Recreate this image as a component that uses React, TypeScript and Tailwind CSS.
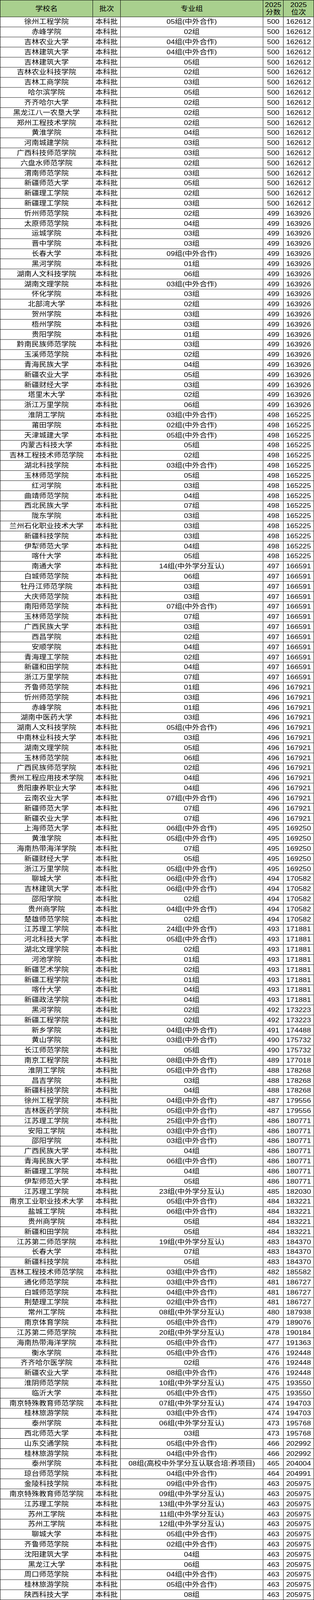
const raw = `徐州工程学院|05组(中外合作)|500|162612
赤峰学院|02组|500|162612
吉林农业大学|04组(中外合作)|500|162612
吉林建筑大学|04组(中外合作)|500|162612
吉林建筑大学|05组|500|162612
吉林农业科技学院|02组|500|162612
吉林工商学院|03组|500|162612
哈尔滨学院|05组|500|162612
齐齐哈尔大学|02组|500|162612
黑龙江八一农垦大学|02组|500|162612
郑州工程技术学院|02组|500|162612
黄淮学院|04组|500|162612
河南城建学院|03组|500|162612
广西科技师范学院|03组|500|162612
六盘水师范学院|02组|500|162612
渭南师范学院|03组|500|162612
新疆师范大学|05组|500|162612
新疆理工学院|02组|500|162612
新疆理工学院|03组|500|162612
忻州师范学院|02组|499|163926
太原师范学院|04组|499|163926
运城学院|03组|499|163926
晋中学院|03组|499|163926
长春大学|09组(中外合作)|499|163926
黑河学院|01组|499|163926
湖南人文科技学院|06组|499|163926
湖南文理学院|03组(中外合作)|499|163926
怀化学院|03组|499|163926
北部湾大学|02组|499|163926
贺州学院|03组|499|163926
梧州学院|03组|499|163926
贵阳学院|01组|499|163926
黔南民族师范学院|03组|499|163926
玉溪师范学院|02组|499|163926
青海民族大学|04组|499|163926
新疆农业大学|05组|499|163926
新疆财经大学|03组|499|163926
塔里木大学|02组|499|163926
浙江万里学院|06组|499|163926
淮阴工学院|03组(中外合作)|498|165225
莆田学院|02组(中外合作)|498|165225
天津城建大学|05组(中外合作)|498|165225
内蒙古科技大学|05组|498|165225
吉林工程技术师范学院|02组|498|165225
湖北科技学院|03组(中外合作)|498|165225
玉林师范学院|05组|498|165225
红河学院|03组|498|165225
曲靖师范学院|04组|498|165225
西北民族大学|07组|498|165225
陇东学院|03组|498|165225
兰州石化职业技术大学|03组|498|165225
新疆科技学院|03组|498|165225
伊犁师范大学|04组|498|165225
喀什大学|05组|498|165225
南通大学|14组(中外学分互认)|497|166591
白城师范学院|06组|497|166591
牡丹江师范学院|03组|497|166591
大庆师范学院|03组|497|166591
南阳师范学院|07组(中外合作)|497|166591
玉林师范学院|07组|497|166591
广西民族大学|03组|497|166591
西昌学院|02组|497|166591
安顺学院|04组|497|166591
青海理工学院|02组|497|166591
新疆和田学院|04组|497|166591
浙江万里学院|07组|497|166591
齐鲁师范学院|01组|496|167921
忻州师范学院|03组|496|167921
赤峰学院|01组|496|167921
湖南中医药大学|03组|496|167921
湖南人文科技学院|05组(中外合作)|496|167921
中南林业科技大学|03组|496|167921
湖南文理学院|05组|496|167921
玉林师范学院|06组|496|167921
广西民族师范学院|02组|496|167921
贵州工程应用技术学院|04组|496|167921
贵阳康养职业大学|04组|496|167921
云南农业大学|07组(中外合作)|496|167921
新疆师范大学|07组|496|167921
新疆农业大学|07组|496|167921
上海师范大学|06组(中外合作)|495|169250
黄淮学院|05组(中外合作)|495|169250
海南热带海洋学院|07组|495|169250
新疆财经大学|05组|495|169250
浙江万里学院|05组(中外合作)|495|169250
聊城大学|06组(中外合作)|494|170582
吉林建筑大学|06组(中外合作)|494|170582
邵阳学院|02组|494|170582
贵州商学院|04组(中外合作)|494|170582
楚雄师范学院|02组|494|170582
江苏理工学院|24组(中外合作)|493|171881
河北科技大学|05组(中外合作)|493|171881
湖北文理学院|02组|493|171881
河池学院|01组|493|171881
新疆艺术学院|02组|493|171881
新疆工程学院|01组|493|171881
喀什大学|04组|493|171881
新疆政法学院|04组|493|171881
黑河学院|02组|492|173223
新疆工程学院|02组|492|173223
新乡学院|04组(中外合作)|491|174488
黄山学院|03组(中外合作)|490|175732
长江师范学院|05组|490|175732
南京工程学院|08组(中外合作)|489|177018
淮阴工学院|05组(中外合作)|488|178268
昌吉学院|03组|488|178268
新疆科技学院|04组|488|178268
徐州工程学院|04组(中外合作)|487|179556
吉林医药学院|05组(中外合作)|487|179556
江苏理工学院|25组(中外合作)|486|180771
安阳工学院|03组(中外合作)|486|180771
邵阳学院|03组(中外合作)|486|180771
广西民族大学|04组|486|180771
青海民族大学|06组(中外合作)|486|180771
新疆理工学院|04组|486|180771
伊犁师范大学|05组|486|180771
江苏理工学院|23组(中外学分互认)|485|182030
南京工业职业技术大学|05组(中外合作)|484|183221
盐城工学院|06组(中外合作)|484|183221
贵州商学院|05组|484|183221
新疆和田学院|05组|484|183221
江苏第二师范学院|19组(中外学分互认)|483|184370
长春大学|07组|483|184370
新疆科技学院|05组|483|184370
吉林工程技术师范学院|03组(中外合作)|482|185582
通化师范学院|03组(中外合作)|481|186727
白城师范学院|04组(中外合作)|481|186727
荆楚理工学院|02组(中外合作)|481|186727
常州工学院|08组(中外学分互认)|480|187938
南京体育学院|05组(中外合作)|479|189076
江苏第二师范学院|20组(中外学分互认)|478|190184
海南热带海洋学院|05组(中外合作)|477|191363
衡水学院|05组(中外合作)|476|192448
齐齐哈尔医学院|02组|476|192448
新疆农业大学|08组(中外合作)|476|192448
淮阴师范学院|10组(中外学分互认)|475|193550
临沂大学|05组(中外合作)|475|193550
南京特殊教育师范学院|07组(中外学分互认)|474|194703
桂林旅游学院|03组(中外合作)|474|194703
泰州学院|06组(中外学分互认)|473|195768
西北师范大学|03组|473|195768
山东交通学院|05组(中外合作)|466|202992
桂林旅游学院|04组(中外合作)|466|202992
泰州学院|08组(高校中外学分互认联合培:养项目)|465|204004
琼台师范学院|04组(中外合作)|464|204991
金陵科技学院|09组(中外合作)|463|205975
南京特殊教育师范学院|09组(中外学分互认)|463|205975
江苏理工学院|13组(中外学分互认)|463|205975
苏州工学院|11组(中外学分互认)|463|205975
苏州工学院|12组(中外学分互认)|463|205975
聊城大学|05组(中外合作)|463|205975
齐鲁师范学院|02组(中外合作)|463|205975
沈阳建筑大学|04组|463|205975
黑龙江大学|06组|463|205975
周口师范学院|04组(中外合作)|463|205975
桂林旅游学院|05组(中外合作)|463|205975
陕西科技大学|08组|463|205975`;

const rows = raw.split("\n").map((line) => {
  const [school, group, score, rank] = line.split("|");
  return { school, group, score, rank };
});

const cols = "grid grid-cols-[237px_71px_365px_52px_78px]";
const cell =
  "flex items-center justify-center border-r border-black whitespace-nowrap overflow-hidden";

export default function App() {
  return (
    <div className="w-[804px] h-[4096px] overflow-hidden bg-white">
      <div
        className="flex flex-col w-[804px] origin-top scale-y-[0.89005] text-black text-[19px] leading-[24px] border-l border-black"
        style={{ fontFamily: '"Liberation Sans", "Noto Sans CJK SC", sans-serif' }}
      >
        {/* Header */}
        <div className={`${cols} grid-rows-[48px] h-[49px] shrink-0 overflow-hidden bg-[#a9d08e] border-t border-b border-black`}>
          <div className={cell}>学校名</div>
          <div className={cell}>批次</div>
          <div className={cell}>专业组</div>
          <div className={`${cell} flex-col leading-[22px]`}>
            <span>2025</span>
            <span>分数</span>
          </div>
          <div className={`${cell} flex-col leading-[22px]`}>
            <span>2025</span>
            <span>位次</span>
          </div>
        </div>

        {/* Rows */}
        {rows.map((r, i) => (
          <div
            key={i}
            className={`${cols} grid-rows-[28px] h-[29px] shrink-0 overflow-hidden border-b border-black`}
          >
            <div className={cell}>{r.school}</div>
            <div className={cell}>本科批</div>
            <div className={cell}>{r.group}</div>
            <div className={cell}>{r.score}</div>
            <div className={cell}>{r.rank}</div>
          </div>
        ))}
      </div>
    </div>
  );
}
